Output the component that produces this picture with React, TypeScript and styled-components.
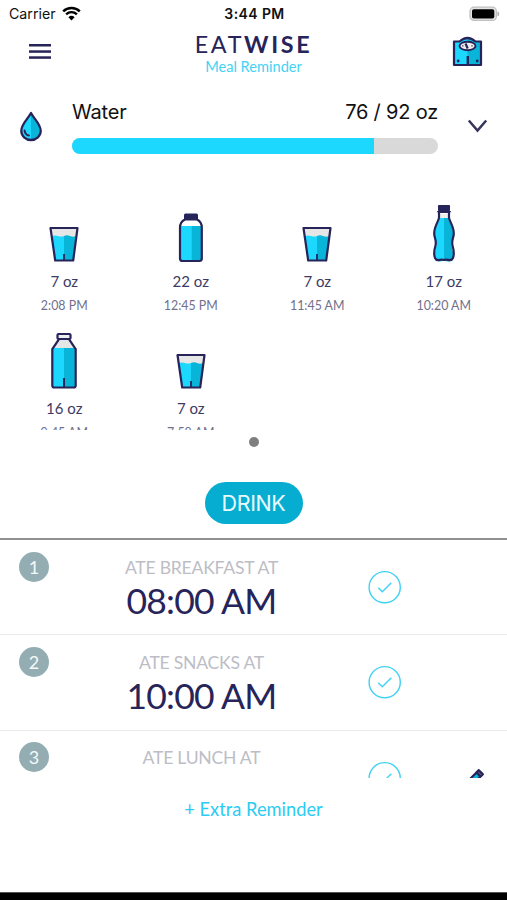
import React from "react";
import styled, { createGlobalStyle } from "styled-components";

const NAVY = "#27245a";
const CYAN = "#1cd8ff";
const TEAL = "#08b4d8";

const Global = createGlobalStyle`
  * { box-sizing: border-box; }
  body { margin: 0; background: #fff; overflow: hidden; }
  svg { display: block; }
`;

const Screen = styled.div`
  width: 507px;
  height: 900px;
  display: flex;
  flex-direction: column;
  background: #fff;
  font-family: Lato, sans-serif;
  color: ${NAVY};
  overflow: hidden;
  white-space: nowrap;
`;

const StatusBar = styled.div`
  height: 27px;
  flex: none;
  display: grid;
  grid-template-columns: 1fr auto 1fr;
  align-items: center;
  padding: 0 7px 0 9px;
  font-family: Inter, sans-serif;
  color: #111;
`;

const Carrier = styled.div`
  display: flex;
  align-items: center;
  gap: 6px;
  font-size: 14.2px;
`;

const Clock = styled.div`
  font-size: 14px;
  font-weight: 600;
  letter-spacing: 0.4px;
`;

const BatteryWrap = styled.div`
  display: flex;
  justify-content: flex-end;
`;

const Header = styled.header`
  height: 63px;
  flex: none;
  display: grid;
  grid-template-columns: 80px 1fr 80px;
  align-items: start;
`;

const IconButton = styled.button<{ $top: number; $left: number }>`
  border: 0;
  background: none;
  padding: ${(p) => p.$top}px 0 0 ${(p) => p.$left}px;
`;

const Brand = styled.div`
  display: flex;
  flex-direction: column;
  align-items: center;
  padding-top: 4px;
`;

const Logo = styled.h1`
  margin: 0;
  font-size: 23.3px;
  line-height: 27px;
  font-weight: 400;
  letter-spacing: 2.65px;
  b { font-weight: 700; }
`;

const Tagline = styled.div`
  font-size: 14.6px;
  line-height: 18px;
  color: #45d2f5;
`;

const WaterRow = styled.section`
  height: 75px;
  flex: none;
  display: grid;
  grid-template-columns: 72px 366px 1fr;
  font-family: Inter, sans-serif;
`;

const DropSlot = styled.div`
  padding: 20px 0 0 19px;
`;

const WaterInfo = styled.div`
  display: flex;
  flex-direction: column;
  padding-top: 9px;
  gap: 12px;
`;

const WaterText = styled.div`
  display: flex;
  justify-content: space-between;
  font-size: 20px;
  line-height: 27px;
  letter-spacing: -0.2px;
  color: #111;
`;

const Track = styled.div`
  height: 16px;
  border-radius: 8px;
  background: #d9d9d9;
  overflow: hidden;
`;

const Fill = styled.div`
  height: 100%;
  background: ${CYAN};
`;

const ChevronSlot = styled.div`
  padding: 29px 0 0 29px;
`;

const DrinkGrid = styled.section`
  height: 265px;
  flex: none;
  display: grid;
  grid-template-columns: repeat(4, 1fr);
  grid-auto-rows: 127px;
  padding: 39px 0 0 1px;
  overflow: hidden;
`;

const DrinkCell = styled.div`
  display: flex;
  flex-direction: column;
  align-items: center;
`;

const Amount = styled.div`
  font-size: 15px;
  line-height: 20px;
  margin-top: 7px;
  color: #3d3b63;
`;

const DrinkTime = styled.div`
  font-size: 12.4px;
  line-height: 18px;
  margin-top: 6px;
  color: #72708c;
`;

const Pager = styled.div`
  height: 52px;
  flex: none;
  display: flex;
  justify-content: center;
  padding: 7px 0 0 1px;
`;

const Dot = styled.span`
  width: 10px;
  height: 10px;
  border-radius: 50%;
  background: #7f7f7f;
`;

const DrinkBar = styled.div`
  height: 58px;
  flex: none;
  display: flex;
  justify-content: center;
  align-items: flex-start;
  border-bottom: 2px solid #909090;
`;

const DrinkButton = styled.button`
  width: 98px;
  height: 42px;
  border: 0;
  border-radius: 21px;
  padding: 0;
  background: #06add0;
  color: #e8fbff;
  font-family: Inter, sans-serif;
  font-size: 21.5px;
  letter-spacing: -0.4px;
`;

const MealList = styled.section`
  height: 238px;
  flex: none;
  overflow: hidden;
`;

const MealRow = styled.div`
  height: 95.4px;
  display: grid;
  grid-template-columns: 68px 267px 99px 1fr;
  border-bottom: 1.5px solid #ebebeb;
`;

const Badge = styled.div`
  width: 30px;
  height: 30px;
  margin: 11.5px 0 0 19px;
  border-radius: 50%;
  background: #94adb2;
  color: #f2fafb;
  font-size: 18px;
  line-height: 30px;
  text-align: center;
`;

const Meal = styled.div`
  display: flex;
  flex-direction: column;
  align-items: center;
  padding-top: 16.6px;
`;

const MealLabel = styled.div`
  font-size: 17.6px;
  line-height: 22px;
  letter-spacing: -0.25px;
  color: #bdbdc6;
`;

const MealTime = styled.div`
  font-size: 35.5px;
  line-height: 44px;
  letter-spacing: -0.75px;
  color: ${NAVY};
`;

const CheckSlot = styled.div`
  padding: 30px 0 0 33px;
`;

const EditSlot = styled.div`
  padding: 36px 0 0 30px;
`;

const Footer = styled.footer`
  flex: 1;
  display: flex;
  justify-content: center;
  padding-top: 19px;
  color: #2bcbf3;
  font-size: 18.3px;
  line-height: 24px;
`;

const HomeEdge = styled.div`
  height: 8px;
  flex: none;
  background: #000;
  border-top: 1px solid #555;
`;

const Wifi = () => (
  <svg width="19" height="15" viewBox="0 0 19 15" fill="none" stroke="#000">
    <path d="M1.2 5.3a12 12 0 0 1 16.6 0" strokeWidth="2.5" />
    <path d="M4.1 8.3a7.8 7.8 0 0 1 10.8 0" strokeWidth="2.3" />
    <path d="M6.4 11.2a4.5 4.5 0 0 1 6.2 0L9.5 14.4z" fill="#000" stroke="none" />
  </svg>
);

const Battery = () => (
  <svg width="31" height="16" viewBox="0 0 31 16">
    <rect x="1" y="1.2" width="26.4" height="13.2" rx="4" fill="#e4e4e4" stroke="#c0c0c0" strokeWidth="1.3" />
    <rect x="3" y="3.3" width="22.3" height="9.2" rx="1.8" fill="#000" />
    <path d="M28.5 5.4c2.3.5 2.3 4.3 0 4.8z" fill="#aaa" />
  </svg>
);

const Menu = () => (
  <svg width="22" height="17" viewBox="0 0 22 17" fill={NAVY}>
    <rect y="1" width="22" height="2.5" />
    <rect y="7.3" width="22" height="2.5" />
    <rect y="13.3" width="22" height="2.5" />
  </svg>
);

const Scale = () => (
  <svg width="31" height="31" viewBox="0 0 31 31">
    <path d="M2 5h6q7.5-6 15 0h6v23H2z" fill={CYAN} />
    <path d="M15.5 2q4 0 7.5 3H29v23H15.5z" fill={TEAL} />
    <path d="M2 5.5h5.5q8-7 16 0H29v23.5H2z" fill="none" stroke={NAVY} strokeWidth="2.2" strokeLinejoin="round" />
    <ellipse cx="15.5" cy="10" rx="8" ry="4.2" fill="#eee" stroke={NAVY} strokeWidth="1.9" />
    <path d="M13.5 7.5l2.2 5" stroke={NAVY} strokeWidth="2.2" />
    <path d="M10.8 9.3v1.2M20 9.3v1.2" stroke={NAVY} strokeWidth="1.2" />
    <path d="M15.8 20v8" stroke={NAVY} strokeWidth="2.4" />
    <circle cx="6.2" cy="25" r="1.4" fill={NAVY} />
    <circle cx="25.2" cy="25" r="1.4" fill={NAVY} />
  </svg>
);

const Drop = () => (
  <svg width="24" height="33" viewBox="0 0 24 33">
    <path d="M12 3C9 9 3 14 3 20.5a9 9 0 0 0 9 9z" fill={CYAN} />
    <path d="M12 3c3 6 9 11 9 17.5a9 9 0 0 1-9 9z" fill={TEAL} />
    <path d="M12 3C9 9 2.3 14 2.3 20.8a9.7 9.2 0 0 0 19.4 0C21.7 14 15 9 12 3z" fill="none" stroke={NAVY} strokeWidth="2.3" strokeLinejoin="round" />
    <path d="M5.6 20.5q.5 4.3 4.3 5.1" fill="none" stroke={NAVY} strokeWidth="2" strokeLinecap="round" />
  </svg>
);

const Chevron = () => (
  <svg width="21" height="15" viewBox="0 0 21 15" fill="none" stroke="#37355c" strokeWidth="2.5">
    <path d="M1.8 1.5l8.7 10L19.2 1.5" />
  </svg>
);

type DrinkKind = "glass" | "jug" | "sport" | "bottle";

const outline = { fill: "none", stroke: NAVY, strokeWidth: 2.2, strokeLinejoin: "round" as const };

const DrinkIcon = ({ kind }: { kind: DrinkKind }) => (
  <svg width="40" height="60" viewBox="0 0 40 60">
    {kind === "glass" && (
      <>
        <path d="M7 24.5h26L29 56H11z" fill="#e6e6e6" />
        <path d="M8 32q3-1 6 0t6 0v24.5h-9z" fill={CYAN} />
        <path d="M20 32q3-1.5 6 0t6 0L29 56.5h-9z" fill={TEAL} />
        <path d="M6.5 24h27L29.2 56.5H11.2z" {...outline} />
        <path d="M20 50v6" stroke={NAVY} strokeWidth="1.8" />
      </>
    )}
    {kind === "jug" && (
      <>
        <path d="M9.5 22h10.7v35H9.5z" fill={CYAN} />
        <path d="M20.2 22H31v35H20.2z" fill={TEAL} />
        <path d="M14 15.5h12q4.8 2.5 4.8 8v31q0 2.5-2.5 2.5H11.5Q9 57 9 54.500v-31q0-5.500 5-8z" {...outline} />
        <path d="M14.5 9.5h11q1.5 0 1.5 1.5v3.5q0 1.5-1.5 1.5h-11q-1.5 0-1.5-1.5V11q0-1.5 1.5-1.5z" fill={NAVY} />
      </>
    )}
    {kind === "sport" && (
      <>
        <path d="M15 10h10v5H15z" fill="#eee" />
        <path d="M15 14h5v42.5q-4 2-8.500 0-2-4 .5-12.500 1-4-1-11-1-7 4-17z" fill={CYAN} />
        <path d="M20 14h5v2q5 10 4 17-2 7-1 11 2.500 8.500.5 12.500-4.500 2-8.500 0z" fill={TEAL} />
        <path d="M15 8v6c-1.5 5-4.8 9-4.8 15.5 0 4 2.6 7 1.3 12-1 3.5-2.3 8-.5 12.500 2 4.500 5.500.3 9 2 3.500-1.700 7 2.500 9-2 1.800-4.500.5-9-.5-12.500-1.300-5 1.300-8 1.300-12C29.800 23 26.500 19 25 14V8z" {...outline} />
        <path d="M14.5 1.5h11v5l1 1.5h-13l1-1.5z" fill={NAVY} stroke={NAVY} />
      </>
    )}
    {kind === "bottle" && (
      <>
        <path d="M14 8h12l6 10v38H8V18z" fill="#e6e6e6" />
        <path d="M9 17h11v39H9z" fill={CYAN} />
        <path d="M20 17h11v39H20z" fill={TEAL} />
        <path d="M14.7 7.5v1.200L8.300 18.200v36.300q0 2 2 2h19.400q2 0 2-2V18.200l-6.400-9.500V7.500z" {...outline} />
        <rect x="13.5" y="3" width="13" height="5" rx="1" {...outline} fill="#eee" />
        <path d="M20 47v9" stroke={NAVY} strokeWidth="2" />
      </>
    )}
  </svg>
);

const Check = () => (
  <svg width="34" height="34" viewBox="0 0 34 34" fill="none" stroke="#3fd2f4" strokeWidth="1.4">
    <circle cx="16.7" cy="17.2" r="15.6" />
    <path d="M10.3 17.7l4 4 9-9" />
  </svg>
);

const Pencil = () => (
  <svg width="24" height="24" viewBox="0 0 24 24">
    <path d="M3 15L14.5 3.5l4 4L7 19l-5 1.5z" fill={TEAL} stroke={NAVY} strokeWidth="2.2" strokeLinejoin="round" />
    <path d="M12.5 5.5l2.3-2.3 3.9 3.9-2.3 2.3z" fill="#67647f" stroke={NAVY} strokeWidth="2.2" strokeLinejoin="round" />
  </svg>
);

const drinks: { kind: DrinkKind; amount: string; time: string }[] = [
  { kind: "glass", amount: "7 oz", time: "2:08 PM" },
  { kind: "jug", amount: "22 oz", time: "12:45 PM" },
  { kind: "glass", amount: "7 oz", time: "11:45 AM" },
  { kind: "sport", amount: "17 oz", time: "10:20 AM" },
  { kind: "bottle", amount: "16 oz", time: "9:45 AM" },
  { kind: "glass", amount: "7 oz", time: "7:58 AM" },
];

const meals = [
  { label: "ATE BREAKFAST AT", time: "08:00 AM", editable: false },
  { label: "ATE SNACKS AT", time: "10:00 AM", editable: false },
  { label: "ATE LUNCH AT", time: "12:00 PM", editable: true },
];

export default function App() {
  const consumed = 76;
  const goal = 92;
  return (
    <Screen>
      <Global />
      <StatusBar>
        <Carrier>Carrier <Wifi /></Carrier>
        <Clock>3:44 PM</Clock>
        <BatteryWrap><Battery /></BatteryWrap>
      </StatusBar>
      <Header>
        <IconButton $top={16} $left={29} aria-label="Menu"><Menu /></IconButton>
        <Brand>
          <Logo>EAT<b>WISE</b></Logo>
          <Tagline>Meal Reminder</Tagline>
        </Brand>
        <IconButton $top={9} $left={25} aria-label="Weight"><Scale /></IconButton>
      </Header>
      <WaterRow>
        <DropSlot><Drop /></DropSlot>
        <WaterInfo>
          <WaterText><span>Water</span><span>{consumed} / {goal} oz</span></WaterText>
          <Track><Fill style={{ width: `${(consumed / goal) * 100}%` }} /></Track>
        </WaterInfo>
        <ChevronSlot><Chevron /></ChevronSlot>
      </WaterRow>
      <DrinkGrid>
        {drinks.map((d) => (
          <DrinkCell key={d.time}>
            <DrinkIcon kind={d.kind} />
            <Amount>{d.amount}</Amount>
            <DrinkTime>{d.time}</DrinkTime>
          </DrinkCell>
        ))}
      </DrinkGrid>
      <Pager><Dot /></Pager>
      <DrinkBar><DrinkButton>DRINK</DrinkButton></DrinkBar>
      <MealList>
        {meals.map((m, i) => (
          <MealRow key={m.label}>
            <Badge>{i + 1}</Badge>
            <Meal>
              <MealLabel>{m.label}</MealLabel>
              <MealTime>{m.time}</MealTime>
            </Meal>
            <CheckSlot><Check /></CheckSlot>
            <EditSlot>{m.editable && <Pencil />}</EditSlot>
          </MealRow>
        ))}
      </MealList>
      <Footer>+ Extra Reminder</Footer>
      <HomeEdge />
    </Screen>
  );
}
